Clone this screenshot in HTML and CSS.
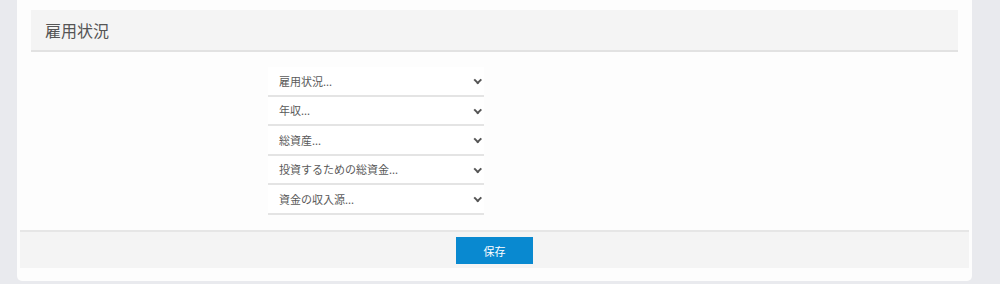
FILE: index.html
```html
<!DOCTYPE html>
<html lang="ja">
<head>
    <meta charset="UTF-8">
    <meta name="viewport" content="width=device-width, initial-scale=1.0">
    <title>雇用状況</title>
    <link rel="stylesheet" href="styles.css">
</head>
<body>
    <div class="page">
        <div class="card">
            <div class="panel-head">
                <h2>雇用状況</h2>
            </div>
            <form class="panel-body">
                <div class="fields">
                    <div class="select-row"><span>雇用状況...</span><span class="chev"></span></div>
                    <div class="select-row"><span>年収...</span><span class="chev"></span></div>
                    <div class="select-row"><span>総資産...</span><span class="chev"></span></div>
                    <div class="select-row"><span>投資するための総資金...</span><span class="chev"></span></div>
                    <div class="select-row"><span>資金の収入源...</span><span class="chev"></span></div>
                </div>
            </form>
            <div class="panel-foot">
                <button type="button" class="btn-save">保存</button>
            </div>
        </div>
    </div>
</body>
</html>
```

FILE: styles.css
```css
body {
    margin: 0;
    padding: 0;
    background-color: #e9eaee;
    font-family: "Noto Sans CJK JP", "Noto Sans", sans-serif;
    color: #555;
}
.page {
    padding: 0 28px 3px 17px;
}
.card {
    background-color: #fdfdfd;
    border-radius: 0 0 5px 5px;
    padding: 10px 3px 14px 3px;
    height: 257px;
    box-sizing: content-box;
}
.panel-head {
    margin: 0 11px;
    background-color: #f4f4f4;
    border-bottom: 2px solid #e2e2e2;
    height: 40px;
    display: flex;
    align-items: center;
    padding-left: 14px;
}
.panel-head h2 {
    margin: 0;
    font-size: 16px;
    font-weight: normal;
    color: #555;
}
.panel-body {
    padding: 15px 0 15px 248px;
}
.fields {
    width: 216px;
}
.select-row {
    height: 29.5px;
    box-sizing: border-box;
    background-color: #fff;
    border-bottom: 2px solid #e4e4e4;
    display: flex;
    align-items: center;
    justify-content: space-between;
    padding: 0 4px 0 11px;
    font-size: 11px;
    color: #5a5a5a;
}
.chev {
    width: 3.5px;
    height: 3.5px;
    border-right: 2px solid #555;
    border-bottom: 2px solid #555;
    transform: rotate(45deg);
    margin-top: -2px;
}
.panel-foot {
    background-color: #f4f4f4;
    border-top: 2px solid #e6e6e6;
    height: 36px;
    display: flex;
    justify-content: center;
    align-items: center;
}
.btn-save {
    width: 77px;
    height: 27px;
    background-color: #0989d0;
    color: #fff;
    border: none;
    font-family: inherit;
    font-size: 11px;
    cursor: pointer;
    margin-top: 2px;
}
```
